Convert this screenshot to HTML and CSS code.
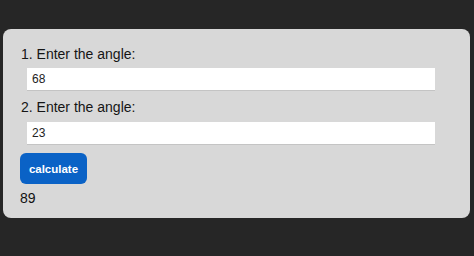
FILE: index.html
```html
<!DOCTYPE html>
<html>
<head>
<meta charset="utf-8">
<link rel="stylesheet" href="styles.css">
</head>
<body>
<div class="panel">
  <label class="label">1. Enter the angle:</label>
  <input class="field" type="text" value="68">
  <label class="label">2. Enter the angle:</label>
  <input class="field" type="text" value="23">
  <button class="btn">calculate</button>
  <div class="result">89</div>
</div>
</body>
</html>
```

FILE: styles.css
```css
html, body {
  margin: 0;
  padding: 0;
  background: #262626;
  height: 100%;
}
body {
  padding: 29px 4px 0 3px;
  box-sizing: border-box;
  font-family: "Liberation Sans", Arial, sans-serif;
}
.panel {
  background: #d8d8d8;
  border-radius: 8px;
  height: 189px;
  box-sizing: border-box;
  padding: 17px 17px 0 17px;
  display: flex;
  flex-direction: column;
  align-items: flex-start;
}
.label {
  font-size: 14px;
  line-height: 16px;
  color: #151515;
  padding-left: 1px;
}
.field {
  margin: 6px 0 8px 7px;
  width: 408px;
  height: 23px;
  box-sizing: border-box;
  border: none;
  border-bottom: 1px solid #c4c4c4;
  background: #fff;
  padding: 0 5px;
  font-family: "Liberation Sans", Arial, sans-serif;
  font-size: 12px;
  color: #222;
  outline: none;
}
.label + .field + .label + .field {
  margin-top: 7px;
}
.btn {
  width: 67px;
  height: 31px;
  border: none;
  border-radius: 6px;
  background: #0a62c6;
  color: #fff;
  font-family: "Liberation Sans", Arial, sans-serif;
  font-weight: bold;
  font-size: 11.5px;
  padding: 0;
}
.result {
  margin-top: 6px;
  font-size: 14px;
  line-height: 16px;
  color: #111;
}
```
